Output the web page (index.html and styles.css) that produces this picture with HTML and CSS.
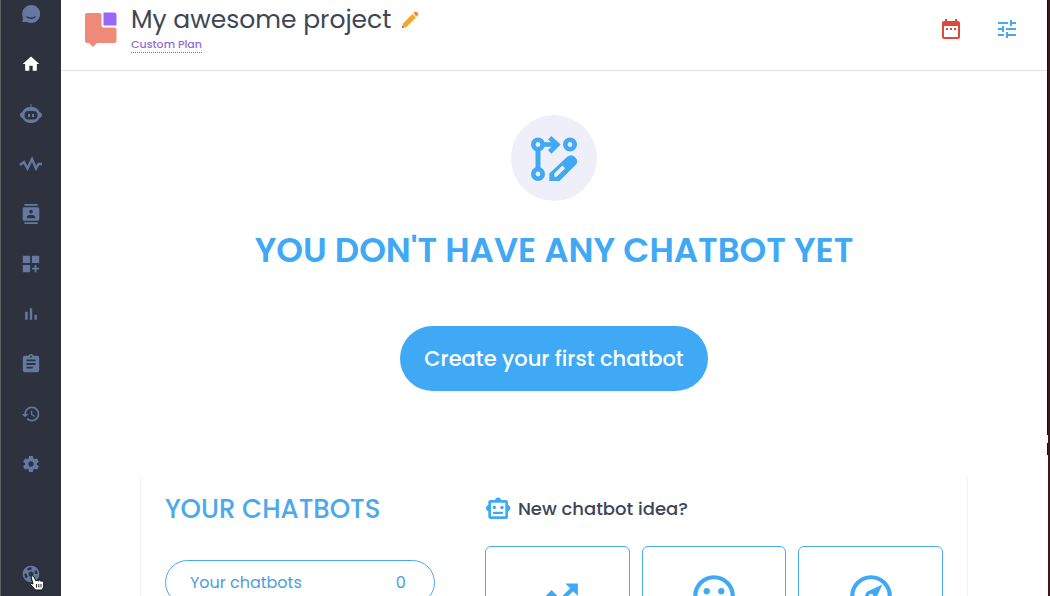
FILE: index.html
```html
<!DOCTYPE html>
<html lang="en">
<head>
<meta charset="utf-8">
<title>My awesome project</title>
<link rel="stylesheet" href="styles.css">
</head>
<body>
<div class="app">
  <nav class="sidebar" aria-label="Main">
    <a class="nav-link brand" href="#" aria-label="Chat"><svg width="20" height="20" viewBox="0 0 20 20"><path fill="currentColor" d="M10 1a9 9 0 1 1-4 17H1.500l.4-4.500A9 9 0 0 1 10 1z"/><path d="M5.500 12.500q4.500 3.500 9 0" fill="none" stroke="#2d323e" stroke-width="1.300"/></svg></a>
    <a class="nav-link active" href="#" aria-label="Home"><svg width="20" height="20" viewBox="0 0 24 24"><path fill="currentColor" d="M10 20v-6h4v6h5v-8h3L12 3 2 12h3v8z"/></svg></a>
    <a class="nav-link" href="#" aria-label="Chatbots"><svg width="24" height="22" viewBox="0 0 24 22"><path fill="currentColor" d="M11.500 1h1v3c4 0 7 2 8 5 1.500.300 2.500 1.500 2.500 3s-1 2.700-2.500 3c-1.500 3.500-4.500 5-8.500 5s-7-1.500-8.500-5C2 14.700 1 13.500 1 12s1-2.700 2.500-3c1-3 4-5 8-5z"/><rect x="5.500" y="8" width="13" height="8.500" rx="4" fill="#2d323e"/><path fill="currentColor" d="M9 11h2v3H9zm4 0h2v3h-2z"/></svg></a>
    <a class="nav-link" href="#" aria-label="Activity"><svg width="24" height="16" viewBox="0 0 24 16"><path d="M1 9l4-3 3.500 6.500L13 3l4 9.500L19.500 8H23" fill="none" stroke="currentColor" stroke-width="2.400"/></svg></a>
    <a class="nav-link" href="#" aria-label="Contacts"><svg width="20" height="20" viewBox="0 0 24 24"><path fill="currentColor" d="M20 0H4v2h16V0zM4 24h16v-2H4v2zM20 4H4c-1.100 0-2 .9-2 2v12c0 1.100.9 2 2 2h16c1.100 0 2-.9 2-2V6c0-1.100-.9-2-2-2zm-8 2.750c1.240 0 2.250 1.010 2.250 2.250s-1.010 2.250-2.250 2.250S9.750 10.240 9.750 9 10.760 6.750 12 6.750zM17 17H7v-1.500c0-1.670 3.330-2.500 5-2.500s5 .83 5 2.500V17z"/></svg></a>
    <a class="nav-link" href="#" aria-label="Add widget"><svg width="20" height="20" viewBox="1 1 22 22"><path fill="currentColor" d="M3 3h8v8H3zM13 3h8v8h-8zM3 13h8v8H3zM18 13h-2v3h-3v2h3v3h2v-3h3v-2h-3z"/></svg></a>
    <a class="nav-link" href="#" aria-label="Analytics"><svg width="20" height="20" viewBox="0 0 24 24"><path fill="currentColor" d="M5 9.200h3V19H5zM10.600 5h2.800v14h-2.800zm5.600 8H19v6h-2.800z"/></svg></a>
    <a class="nav-link" href="#" aria-label="Reports"><svg width="20" height="20" viewBox="1 1 22 22"><path fill="currentColor" d="M19 3h-4.180C14.400 1.840 13.300 1 12 1c-1.300 0-2.400.84-2.820 2H5c-1.100 0-2 .9-2 2v14c0 1.100.9 2 2 2h14c1.100 0 2-.9 2-2V5c0-1.100-.9-2-2-2zm-7 0c.55 0 1 .45 1 1s-.45 1-1 1-1-.45-1-1 .45-1 1-1zm2 14H7v-2h7v2zm3-4H7v-2h10v2zm0-4H7V7h10v2z"/></svg></a>
    <a class="nav-link" href="#" aria-label="History"><svg width="20" height="20" viewBox="0 0 24 24"><path fill="currentColor" d="M13 3c-4.970 0-9 4.030-9 9H1l3.890 3.890.07.14L9 12H6c0-3.870 3.130-7 7-7s7 3.130 7 7-3.130 7-7 7c-1.930 0-3.680-.79-4.940-2.060l-1.420 1.420C8.270 19.990 10.510 21 13 21c4.970 0 9-4.030 9-9s-4.030-9-9-9zm-1 5v5l4.280 2.540.72-1.210-3.500-2.080V8H12z"/></svg></a>
    <a class="nav-link" href="#" aria-label="Settings"><svg width="20" height="20" viewBox="0 0 24 24"><path fill="currentColor" d="M19.140 12.940c.04-.3.060-.61.060-.94 0-.32-.02-.64-.07-.94l2.030-1.580c.18-.14.230-.41.120-.61l-1.920-3.320c-.12-.22-.37-.29-.59-.22l-2.390.96c-.5-.38-1.030-.7-1.620-.94l-.36-2.540c-.04-.24-.24-.41-.48-.41h-3.840c-.24 0-.43.17-.47.41l-.36 2.540c-.59.24-1.130.57-1.620.94l-2.390-.96c-.22-.08-.47 0-.59.220L2.740 8.870c-.12.210-.08.470.120.610l2.030 1.580c-.05.3-.09.630-.09.940s.02.640.070.940l-2.030 1.580c-.18.140-.23.410-.12.610l1.920 3.320c.12.220.370.290.590.220l2.390-.96c.5.380 1.030.7 1.620.940l.36 2.540c.05.240.240.410.480.410h3.840c.24 0 .44-.17.470-.41l.36-2.540c.59-.24 1.130-.56 1.620-.94l2.390.96c.22.080.470 0 .59-.22l1.920-3.320c.12-.22.070-.47-.12-.61l-2.010-1.580zM12 15.200c-1.760 0-3.200-1.440-3.200-3.200s1.440-3.200 3.200-3.200 3.200 1.440 3.200 3.200-1.440 3.200-3.200 3.200z"/></svg></a>
    <a class="nav-link help" href="#" aria-label="Help"><svg width="20" height="20" viewBox="0 0 24 24" fill="none" stroke="currentColor"><circle cx="12" cy="12" r="9" stroke-width="2"/><circle cx="12" cy="12" r="6.500" stroke-width="5" stroke-dasharray="5.200 5"/><circle cx="12" cy="12" r="4" stroke-width="2"/></svg><svg class="pointer" width="16" height="18" viewBox="0 0 16 18"><path d="M2 2.500Q3.500 1 5 3l2 4 1-1 1.500 1 1.200-1 1.300 1.300 1.500-.6 1.200 1.800v4.500L13 16H6.500L1.500 10.500Q1.500 8.500 4 10z" fill="#fff" stroke="#111" stroke-width="1"/><path d="M7.500 10v3.500m2.300-3.500v3.500m2.200-3.500v3.500" stroke="#111" stroke-width=".9"/></svg></a>
  </nav>

  <main class="main">
    <header class="header">
      <svg class="logo" width="32" height="36" viewBox="0 0 32 36"><path fill="#f08a78" d="M2 1h13q1.500 0 1.500 1.500v11q0 2 2 2h11q2 0 2 2V29q0 2-2 2H12l-4 4-4-4H2q-2 0-2-2V3q0-2 2-2z"/><path fill="#9966fa" d="M18.500.500H29q2.500 0 2.500 2.500v10.500h-13z"/></svg>
      <div class="project">
        <div class="project-row">
          <h1 class="project-name">My awesome project</h1>
          <button class="icon-button" aria-label="Rename project"><svg width="18" height="18" viewBox="0 0 18 18"><path fill="#f5a62f" d="M1 17l1-4.500L11.500 3 15 6.500 5.500 16z"/><path fill="#f08a45" d="M12.300 2.200L14 .8q1-.6 2 .3l1 1q.8 1-.1 2l-1.200 1.600z"/><path fill="#555" d="M1 17l.5-2 1.500 1.500z"/></svg></button>
        </div>
        <a class="plan" href="#">Custom Plan</a>
      </div>
      <div class="tools">
        <button class="icon-button" aria-label="Date range"><svg width="24" height="24" viewBox="0 0 24 24"><path fill="#e0483b" d="M9 11H7v2h2v-2zm4 0h-2v2h2v-2zm4 0h-2v2h2v-2zm2-7h-1V2h-2v2H8V2H6v2H5c-1.110 0-1.990.9-1.990 2L3 20c0 1.100.89 2 2 2h14c1.100 0 2-.9 2-2V6c0-1.100-.9-2-2-2zm0 16H5V9h14v11z"/></svg></button>
        <button class="icon-button" aria-label="Filters"><svg width="24" height="24" viewBox="0 0 24 24"><path fill="#4aa9ec" d="M3 17v2h6v-2H3zM3 5v2h10V5H3zm10 16v-2h8v-2h-8v-2h-2v6h2zM7 9v2H3v2h4v2h2V9H7zm14 4v-2H11v2h10zm-6-4h2V7h4V5h-4V3h-2v6z"/></svg></button>
      </div>
    </header>

    <section class="hero">
      <svg width="86" height="86" viewBox="0 0 86 86"><circle cx="43" cy="43" r="43" fill="#efeff9"/><g fill="none" stroke="#3fa9f5" stroke-width="4.600"><circle cx="27" cy="29.500" r="4.700"/><circle cx="59" cy="29.500" r="4.700"/><circle cx="27" cy="59" r="4.700"/><path stroke-width="5" d="M27 34v20"/><path d="M32 29.500h15"/></g><path fill="#3fa9f5" d="M37 24.500l3.400-3.500 9.300 8.500-9.300 9.300-3.400-3.500 5.500-5.800z"/><path fill="#3fa9f5" fill-rule="evenodd" d="M38.300 66v-7.500L56 42q4-3.500 7.500-.3l1 1q3.500 3.500.3 7L48.500 66zM43.300 58.500v3.200h2.300l8.600-8.500-2.900-2.700z"/></svg>
      <h2 class="hero-title">YOU DON'T HAVE ANY CHATBOT YET</h2>
      <button class="create">Create your first chatbot</button>
    </section>

    <section class="panel">
      <div class="column">
        <h2 class="panel-title">YOUR CHATBOTS</h2>
        <a class="counter" href="#"><span>Your chatbots</span><span>0</span></a>
      </div>
      <div class="column">
        <h3 class="idea-title"><svg width="26" height="26" viewBox="0 0 26 26"><path fill="#3fa9f5" fill-rule="evenodd" d="M5.500 4H10a3.200 3.200 0 0 1 6.200 0h4.600Q23 4 23 6v3a3.400 3.400 0 0 1 0 6.500V21q0 2-2.200 2H5.500Q3.300 23 3.300 21v-5.500a3.400 3.400 0 0 1 0-6.500V6q0-2 2.200-2zM6 6.700v13.600h14.300V6.700z"/><path fill="#3fa9f5" d="M8 15.800h10v2.200H8z"/><circle cx="9.300" cy="11.500" r="1.700" fill="#3fa9f5"/><circle cx="17" cy="11.500" r="1.700" fill="#3fa9f5"/></svg>New chatbot idea?</h3>
        <div class="ideas">
          <button class="idea" aria-label="Growth"><svg width="50" height="50" viewBox="0 0 24 24"><path fill="currentColor" d="M16 6l2.290 2.290-4.880 4.880-4-4L2 16.590 3.410 18l6-6 4 4 6.300-6.290L22 12V6z"/></svg></button>
          <button class="idea" aria-label="Engagement"><svg width="50" height="50" viewBox="0 0 24 24"><circle cx="12" cy="12" r="9" fill="none" stroke="currentColor" stroke-width="2"/><circle cx="8.500" cy="9.700" r="1.500" fill="currentColor"/><circle cx="15.500" cy="9.700" r="1.500" fill="currentColor"/><path d="M7.500 14q4.500 5 9 0" fill="none" stroke="currentColor" stroke-width="2"/></svg></button>
          <button class="idea" aria-label="Explore"><svg width="50" height="50" viewBox="0 0 24 24"><circle cx="12" cy="12" r="9" fill="none" stroke="currentColor" stroke-width="2"/><path fill="currentColor" fill-rule="evenodd" d="M17.500 6.500L9.990 9.990 6.500 17.500l7.510-3.490zM12 10.900a1.100 1.100 0 1 0 0 2.200 1.100 1.100 0 0 0 0-2.200z"/></svg></button>
        </div>
      </div>
    </section>
  </main>
  <div class="edge"></div>
</div>
</body>
</html>
```
FILE: styles.css
```css
* {
  box-sizing: border-box;
}

body {
  margin: 0;
  background: #fff;
  color: #3d4657;
  font-family: Poppins, Inter, "Liberation Sans", sans-serif;
}

h1, h2, h3 {
  margin: 0;
}

svg {
  display: block;
  flex: none;
}

button {
  font-family: inherit;
  cursor: pointer;
}

a {
  text-decoration: none;
}

.app {
  display: flex;
  height: 100vh;
  overflow: hidden;
}

.sidebar {
  display: flex;
  flex: none;
  flex-direction: column;
  width: 61px;
  border-left: 1px solid #59625f;
  background: #2d323e;
}

.nav-link {
  position: relative;
  display: flex;
  flex: none;
  align-items: center;
  justify-content: center;
  height: 50px;
  color: #6579a0;
}

.brand {
  align-items: flex-start;
  height: 39px;
  padding-top: 4px;
}

.active {
  color: #fff;
}

.help {
  height: 44px;
  margin-top: auto;
}

.pointer {
  position: absolute;
  top: 22px;
  left: 28px;
}

.main {
  flex: 1;
  min-width: 0;
  overflow: hidden;
}

.header {
  display: flex;
  align-items: flex-start;
  height: 71px;
  padding: 0 24px;
  border-bottom: 1px solid #e3e2ea;
}

.logo {
  margin-top: 12px;
}

.project {
  margin-left: 14px;
}

.project-row {
  display: flex;
  align-items: center;
  gap: 10px;
  height: 38px;
  padding-top: 2px;
}

.project-name {
  font-size: 25px;
  font-weight: 400;
  line-height: 36px;
}

.plan {
  display: block;
  width: fit-content;
  padding-bottom: 2px;
  border-bottom: 1px dotted #777;
  color: #936bd8;
  font-size: 11px;
  font-weight: 500;
  line-height: 12px;
}

.icon-button {
  padding: 0;
  border: 0;
  background: none;
}

.tools {
  display: flex;
  gap: 32px;
  margin-left: auto;
  padding: 17px 4px 0 0;
}

.hero {
  display: flex;
  flex-direction: column;
  align-items: center;
  padding-top: 44px;
}

.hero-title {
  margin-top: 24px;
  color: #3fa9f5;
  font-size: 34px;
  font-weight: 600;
  line-height: 50px;
}

.create {
  height: 65px;
  margin-top: 51px;
  padding: 0 24px;
  border: 0;
  border-radius: 33px;
  background: #3fa9f5;
  color: #fff;
  font-size: 21px;
  font-weight: 500;
}

.panel {
  display: grid;
  grid-template-columns: 270px 1fr;
  gap: 50px;
  width: 84%;
  margin: 83px auto 0;
  padding: 18px 24px 24px;
  border: 1px solid #f1f1f3;
  border-top-color: transparent;
  border-radius: 6px;
}

.panel-title {
  color: #4aa9ec;
  font-size: 26px;
  font-weight: 500;
  line-height: 32px;
}

.counter {
  display: flex;
  align-items: center;
  justify-content: space-between;
  height: 45px;
  margin-top: 35px;
  padding: 0 28px 0 24px;
  border: 1px solid #4aa9ec;
  border-radius: 23px;
  color: #4f9ddb;
  font-size: 16px;
}

.idea-title {
  display: flex;
  align-items: center;
  gap: 7px;
  font-size: 18px;
  font-weight: 500;
  line-height: 32px;
}

.ideas {
  display: grid;
  grid-template-columns: repeat(3, 1fr);
  gap: 12px;
  margin-top: 21px;
}

.idea {
  display: flex;
  justify-content: center;
  height: 145px;
  padding: 24px 0;
  border: 1px solid #4aa9ec;
  border-radius: 6px;
  background: #fff;
  color: #3fa9f5;
}

.edge {
  flex: none;
  width: 3px;
  border-right: 2px solid #42151c;
  background: linear-gradient(#111 435px, #fff 435px 443px, #111 443px 455px, #fff 455px);
}
```
